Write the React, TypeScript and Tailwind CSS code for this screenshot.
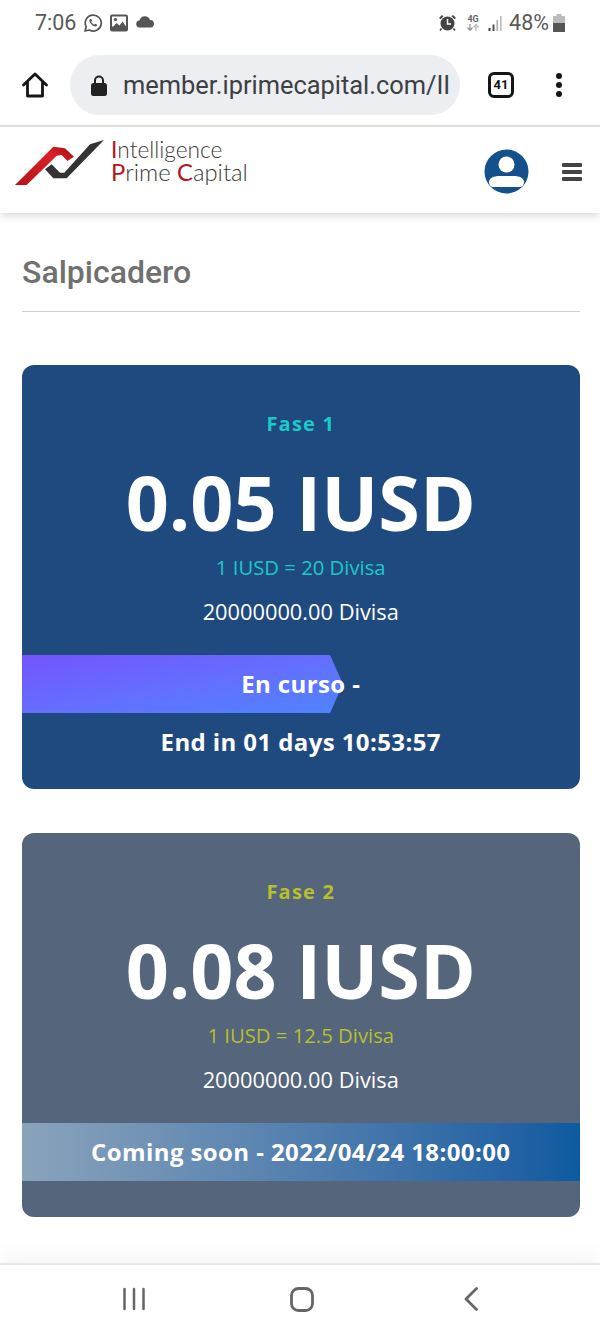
import React from "react";

function StatusBar() {
  return (
    <div className="flex h-[44px] items-center justify-between pl-[35px] pr-[35px] pt-[2px] text-[#555] font-['Roboto',sans-serif]">
      <div className="flex items-center">
        <span className="text-[21.500px] leading-none text-[#5a5a5a]">7:06</span>
        <svg className="ml-[7px]" width="20" height="20" viewBox="0 0 20 20" fill="none">
          <path d="M2 18l1.200-4.200A8 8 0 1 1 6.300 17z" stroke="#555" strokeWidth="1.700" strokeLinejoin="round" />
          <path d="M7 6c-1 1-.8 2.600.7 4.600 1.500 2 3.300 3.200 4.800 3 1-.2 1.700-1 1.600-1.800l-2-1-.9 1c-1.200-.5-2.300-1.600-3-3l.8-1-.9-2z" fill="#555" />
        </svg>
        <svg className="ml-[7px]" width="18" height="18" viewBox="0 0 18 18">
          <rect x="0" y="0.500" width="18" height="17" rx="2" fill="#555" />
          <rect x="2" y="2.500" width="14" height="10" fill="#fff" />
          <circle cx="5.500" cy="5.500" r="1.600" fill="#555" />
          <path d="M2 14l4.500-5 3 2.500 3-4 3.500 5V15H2z" fill="#555" />
        </svg>
        <svg className="ml-[8px] -mt-[3px]" width="19" height="12" viewBox="0 0 19 12">
          <path d="M4 11.500a3.500 3.500 0 0 1-.5-7A5.500 5.500 0 0 1 14 4a3.800 3.800 0 0 1 1 7.500z" fill="#555" />
        </svg>
      </div>
      <div className="flex items-center">
        <svg width="19" height="18" viewBox="0 0 19 18">
          <path d="M1 4l3-3 1.500 1.200-3 3zM18 4l-3-3-1.500 1.200 3 3z" fill="#444" />
          <circle cx="9.500" cy="9.500" r="7" fill="#444" />
          <path d="M9.500 5v5h3.500" stroke="#fff" strokeWidth="1.500" fill="none" />
          <path d="M3.500 14.500l-1.500 2M15.500 14.500l1.500 2" stroke="#444" strokeWidth="1.500" />
        </svg>
        <div className="ml-[9px] flex w-[14px] flex-col items-center leading-none">
          <span className="text-[9px] font-bold text-[#666]">4G</span>
          <svg width="14" height="7" viewBox="0 0 14 7">
            <path d="M4 0v6M1.500 3.500L4 6.500l2.500-3" stroke="#999" strokeWidth="1.300" fill="none" />
            <path d="M10 7V1M7.500 3.500L10 .5l2.500 3" stroke="#bbb" strokeWidth="1.300" fill="none" />
          </svg>
        </div>
        <svg className="ml-[8px]" width="15" height="17" viewBox="0 0 15 17">
          <rect x="0.500" y="13" width="2" height="3" fill="#444" />
          <rect x="4.500" y="9.500" width="2" height="6.500" fill="#555" />
          <rect x="8.500" y="5" width="1.600" height="11" fill="#aaa" />
          <rect x="12" y="1" width="1.600" height="15" fill="#bbb" />
        </svg>
        <span className="ml-[6px] text-[21.500px] leading-none text-[#5a5a5a]">48%</span>
        <svg className="ml-[4px]" width="12" height="18" viewBox="0 0 12 18">
          <rect x="3.500" y="0" width="5" height="2" fill="#bbb" />
          <rect x="0" y="2" width="12" height="7" fill="#bbb" />
          <rect x="0" y="9" width="12" height="9" fill="#555" />
        </svg>
      </div>
    </div>
  );
}

function ChromeBar() {
  return (
    <div className="flex h-[83px] items-center border-b-2 border-[#e4e4e4] pt-[1px] font-['Roboto',sans-serif]">
      <div className="flex w-[70px] justify-center">
        <svg width="28" height="28" viewBox="0 0 28 28" fill="none" className="mr-[1px]">
          <path d="M2.500 14L14 3l11.500 11M6.500 11v14h15V11" stroke="#151515" strokeWidth="2.800" strokeLinejoin="round" strokeLinecap="round" />
        </svg>
      </div>
      <div className="flex h-[60px] w-[390px] items-center overflow-hidden rounded-full bg-[#eceef2] pl-[21px]">
        <svg width="16" height="21" viewBox="0 0 16 21" className="shrink-0">
          <path d="M4 9V5.500a4 4 0 0 1 8 0V9" stroke="#222" strokeWidth="2" fill="none" />
          <rect x="0" y="8" width="16" height="13" rx="2.500" fill="#222" />
        </svg>
        <span className="ml-[16px] whitespace-nowrap pt-[2px] text-[25.400px] leading-none text-[#3c4043]">
          member.iprimecapital.com/II
        </span>
      </div>
      <div className="ml-[28px] flex h-[26px] w-[26px] items-center justify-center rounded-[6px] border-[3px] border-[#151515] text-[13px] font-bold text-[#151515]">
        41
      </div>
      <div className="ml-[42px] flex flex-col gap-[3px]">
        <span className="h-[6px] w-[6px] rounded-full bg-[#151515]" />
        <span className="h-[6px] w-[6px] rounded-full bg-[#151515]" />
        <span className="h-[6px] w-[6px] rounded-full bg-[#151515]" />
      </div>
    </div>
  );
}

function SiteHeader() {
  return (
    <div className="relative z-10 flex h-[86px] items-start justify-between bg-white pl-[10px] pr-[18px] shadow-[0_3px_8px_rgba(0,0,0,0.14)]">
      <div className="mt-[8px] flex items-start">
        <svg width="100" height="55" viewBox="0 0 300 165">
          <defs>
            <linearGradient id="r" x1="0" y1="1" x2="1" y2="0">
              <stop offset="0" stopColor="#b5141c" />
              <stop offset="0.7" stopColor="#dd1f26" />
              <stop offset="1" stopColor="#9c0f16" />
            </linearGradient>
          </defs>
          <path d="M15 150L130 35l35 5 27 25-20 13-17-18-15 2-90 88z" fill="url(#r)" />
          <path d="M105 103l20-15 25 25h13l77-85 42-13-112 115h-40z" fill="#333" />
        </svg>
        <div className="ml-[1px] font-['Lato',sans-serif] font-light text-[#3a3a3a]">
          <div className="mt-[3px] text-[22.700px] leading-[23px]"><span className="font-normal text-[#b5141c]">I</span>ntelligence</div>
          <div className="text-[23.800px] leading-[23px]">
            <span className="font-normal text-[#b5141c]">P</span>rime <span className="font-normal text-[#b5141c]">C</span>apital
          </div>
        </div>
      </div>
      <div className="mt-[22px] flex items-center">
        <svg width="45" height="45" viewBox="0 0 45 45">
          <circle cx="22.500" cy="22.500" r="22" fill="#13508c" />
          <circle cx="22.500" cy="15.500" r="8" fill="#fff" />
          <path d="M5 33c0-4 5-6 10-6h15c5 0 10 2 10 6 0 2-1 4-3 5H8c-2-1-3-3-3-5z" fill="#fff" />
        </svg>
        <div className="ml-[33px] flex w-[20px] flex-col gap-[3px]">
          <span className="h-[4px] rounded-[1px] bg-[#444]" />
          <span className="h-[4px] rounded-[1px] bg-[#444]" />
          <span className="h-[4px] rounded-[1px] bg-[#444]" />
        </div>
      </div>
    </div>
  );
}

function Card({ bg, accent, phase, price, rate, children, pb }: {
  bg: string; accent: string; phase: string; price: string; rate: string; children: React.ReactNode; pb: string;
}) {
  return (
    <div className={`overflow-hidden rounded-[12px] text-center text-white ${bg} ${pb}`}>
      <div className={`mt-[45px] text-[20px] font-bold leading-[27px] tracking-[1.200px] ${accent}`}>{phase}</div>
      <div className="mt-[22px] text-[75.500px] font-bold leading-[86px]">{price}</div>
      <div className={`mt-[10px] text-[20.300px] leading-[25px] ${accent}`}>{rate}</div>
      <div className="mt-[18px] text-[21.800px] leading-[27px]">20000000.00 Divisa</div>
      {children}
    </div>
  );
}

export default function App() {
  return (
    <div className="flex h-[1333px] w-[600px] flex-col overflow-hidden bg-white">
      <StatusBar />
      <ChromeBar />
      <SiteHeader />
      <div className="flex-1 pl-[22px] pr-[20.500px] font-['Open_Sans',sans-serif]">
        <div className="mt-[39px] border-b border-[#cfcfcf] pb-[19px] font-['Roboto',sans-serif] text-[32px] font-medium leading-[40px] text-[#707070]">
          Salpicadero
        </div>
        <div className="mt-[53px]">
          <Card bg="bg-[#1f4a7f]" accent="text-[#1bc9c9]" phase="Fase 1" price="0.05 IUSD" rate="1 IUSD = 20 Divisa" pb="pb-[31px]">
            <div className="relative mt-[30px] h-[58px]">
              <div className="absolute inset-y-0 left-0 w-[321px] bg-gradient-to-br from-[#7353ff] to-[#4d84ff] [clip-path:polygon(0_0,308px_0,100%_50%,308px_100%,0_100%)]" />
              <div className="relative text-[24px] font-bold leading-[58px] tracking-[0.4px]">En curso -</div>
            </div>
            <div className="mt-[13px] text-[24px] font-bold leading-[32px] tracking-[0.4px]">End in 01 days 10:53:57</div>
          </Card>
        </div>
        <div className="mt-[44px]">
          <Card bg="bg-[#54657c]" accent="text-[#b8bf2e]" phase="Fase 2" price="0.08 IUSD" rate="1 IUSD = 12.5 Divisa" pb="pb-[36px]">
            <div className="mt-[30px] h-[58px] bg-gradient-to-r from-[#8aa3bb] to-[#0c5aa0] text-[24px] font-bold leading-[58px] tracking-[0.4px]">
              Coming soon - 2022/04/24 18:00:00
            </div>
          </Card>
        </div>
      </div>
      <div className="relative flex h-[70px] items-center justify-center border-t-2 border-[#e8e8e8] bg-white shadow-[0_-6px_24px_rgba(0,0,0,0.05)]">
        <div className="flex w-[355px] items-center justify-between">
          <svg width="22" height="24" viewBox="0 0 22 24">
            <path d="M1.500 2v20M11 2v20M20.500 2v20" stroke="#666" strokeWidth="2.500" strokeLinecap="round" />
          </svg>
          <svg width="24" height="25" viewBox="0 0 24 25" className="-ml-[5px]">
            <rect x="1.500" y="1.500" width="21" height="22" rx="7" stroke="#666" strokeWidth="2.800" fill="none" />
          </svg>
          <svg width="14" height="24" viewBox="0 0 14 24">
            <path d="M12.500 1.500L2 12l10.500 10.500" stroke="#666" strokeWidth="2.800" strokeLinecap="round" strokeLinejoin="round" fill="none" />
          </svg>
        </div>
      </div>
    </div>
  );
}
